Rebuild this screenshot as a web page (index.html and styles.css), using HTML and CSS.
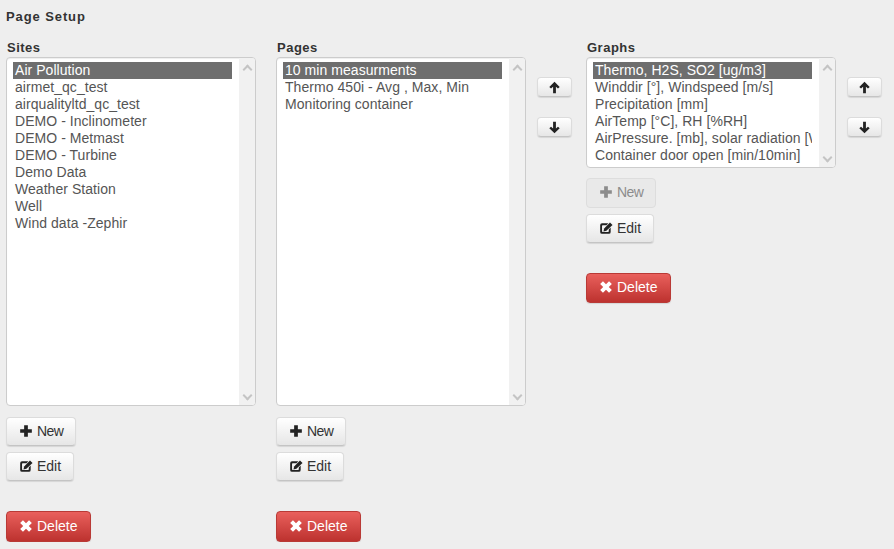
FILE: index.html
```html
<!DOCTYPE html>
<html lang="en">
<head>
  <meta charset="UTF-8">
  <title>Page Setup</title>
  <link rel="stylesheet" href="styles.css">
</head>
<body>
  <svg class="defs" width="0" height="0">
    <symbol id="i-plus" viewBox="0 0 12 12"><path d="M4.4 1h3.2v3.4H11v3.2H7.6V11H4.4V7.6H1V4.4h3.4z"/></symbol>
    <symbol id="i-edit" viewBox="0 0 12 12"><path d="M2.6 2H8L6.4 3.6H3.2q-.6 0-.6.6v4.6q0 .6.6.6h4.6q.6 0 .6-.6V7.2L10 5.6v3.8Q10 11 8.4 11H2.6Q1 11 1 9.4V3.6Q1 2 2.6 2z"/><path d="M9.4 1.2 11.6 3.4 6.3 8.4 3.8 9 4.4 6.4z"/></symbol>
    <symbol id="i-remove" viewBox="0 0 12 12"><path d="M3.4 1 6 3.6 8.6 1 11 3.4 8.4 6 11 8.6 8.6 11 6 8.4 3.4 11 1 8.6 3.6 6 1 3.4z"/></symbol>
    <symbol id="i-up" viewBox="0 0 12 12"><path d="M6 .8 10.8 5.6 9.2 7 7.3 5.2V11.4H4.7V5.2L2.8 7 1.2 5.6z"/></symbol>
    <symbol id="i-down" viewBox="0 0 12 12"><path d="M6 11.4 10.8 6.6 9.2 5.2 7.3 7V.8H4.7V7L2.8 5.2 1.2 6.6z"/></symbol>
  </svg>

  <h1 class="page-title">Page Setup</h1>

  <div class="columns">
    <div class="col">
      <label class="col-title">Sites</label>
      <div class="listbox tall">
        <ul class="options">
          <li class="selected">Air Pollution</li>
          <li>airmet_qc_test</li>
          <li>airqualityltd_qc_test</li>
          <li>DEMO - Inclinometer</li>
          <li>DEMO - Metmast</li>
          <li>DEMO - Turbine</li>
          <li>Demo Data</li>
          <li>Weather Station</li>
          <li>Well</li>
          <li>Wind data -Zephir</li>
        </ul>
        <div class="scrollbar"><span class="chev up"></span><span class="chev down"></span></div>
      </div>
      <div class="actions">
        <button class="btn btn-new"><svg class="icon"><use href="#i-plus"/></svg>New</button>
        <button class="btn"><svg class="icon"><use href="#i-edit"/></svg>Edit</button>
        <button class="btn btn-danger"><svg class="icon"><use href="#i-remove"/></svg>Delete</button>
      </div>
    </div>

    <div class="col">
      <label class="col-title">Pages</label>
      <div class="listbox tall">
        <ul class="options">
          <li class="selected">10 min measurments</li>
          <li>Thermo 450i - Avg , Max, Min</li>
          <li>Monitoring container</li>
        </ul>
        <div class="scrollbar"><span class="chev up"></span><span class="chev down"></span></div>
      </div>
      <div class="actions">
        <button class="btn btn-new"><svg class="icon"><use href="#i-plus"/></svg>New</button>
        <button class="btn"><svg class="icon"><use href="#i-edit"/></svg>Edit</button>
        <button class="btn btn-danger"><svg class="icon"><use href="#i-remove"/></svg>Delete</button>
      </div>
    </div>

    <div class="movers">
      <button class="btn btn-mini"><svg class="icon"><use href="#i-up"/></svg></button>
      <button class="btn btn-mini"><svg class="icon"><use href="#i-down"/></svg></button>
    </div>

    <div class="col">
      <label class="col-title">Graphs</label>
      <div class="listbox short">
        <ul class="options">
          <li class="selected">Thermo, H2S, SO2 [ug/m3]</li>
          <li>Winddir [°], Windspeed [m/s]</li>
          <li>Precipitation [mm]</li>
          <li>AirTemp [°C], RH [%RH]</li>
          <li>AirPressure. [mb], solar radiation [W/m2]</li>
          <li>Container door open [min/10min]</li>
        </ul>
        <div class="scrollbar"><span class="chev up"></span><span class="chev down"></span></div>
      </div>
      <div class="actions compact">
        <button class="btn btn-new disabled"><svg class="icon"><use href="#i-plus"/></svg>New</button>
        <button class="btn"><svg class="icon"><use href="#i-edit"/></svg>Edit</button>
        <button class="btn btn-danger"><svg class="icon"><use href="#i-remove"/></svg>Delete</button>
      </div>
    </div>

    <div class="movers">
      <button class="btn btn-mini"><svg class="icon"><use href="#i-up"/></svg></button>
      <button class="btn btn-mini"><svg class="icon"><use href="#i-down"/></svg></button>
    </div>
  </div>
</body>
</html>
```

FILE: styles.css
```css
body {
  margin: 0;
  padding: 9px 6px 0;
  background-color: #eeeeee;
  color: #333333;
  font-family: "Liberation Sans", Arial, sans-serif;
  font-size: 14px;
  overflow: hidden;
}
.defs {
  position: absolute;
}
.page-title {
  margin: 0;
  font-size: 13px;
  line-height: 15px;
  font-weight: bold;
  letter-spacing: 0.9px;
}
.columns {
  display: flex;
  margin-top: 16px;
}
.col {
  flex: none;
  width: 250px;
  margin-right: 20px;
}
.col-title {
  display: block;
  height: 17px;
  padding-left: 1px;
  font-size: 13px;
  line-height: 16px;
  font-weight: bold;
  letter-spacing: 0.5px;
}
.listbox {
  display: flex;
  box-sizing: border-box;
  background: #fff;
  border: 1px solid #cccccc;
  border-radius: 4px;
  box-shadow: inset 0 1px 1px rgba(0,0,0,0.07);
  overflow: hidden;
}
.listbox.tall {
  height: 349px;
}
.listbox.short {
  height: 111px;
}
.options {
  flex: 1;
  min-width: 0;
  margin: 4px 7px 0 6px;
  padding: 0;
  list-style: none;
  line-height: 17px;
  letter-spacing: 0.05px;
  color: #555555;
}
.options li {
  height: 17px;
  padding: 0 2px;
  white-space: nowrap;
  overflow: hidden;
}
.options li.selected {
  background-color: #6e6e6e;
  color: #fff;
}
.scrollbar {
  flex: none;
  display: flex;
  flex-direction: column;
  justify-content: space-between;
  align-items: center;
  width: 16px;
  padding: 5px 0;
  box-sizing: border-box;
  background-color: #f1f1f1;
}
.chev {
  width: 5px;
  height: 5px;
  border-left: 2px solid #c4c4c4;
  border-top: 2px solid #c4c4c4;
}
.chev.up {
  margin-top: 3px;
  transform: rotate(45deg);
}
.chev.down {
  margin-bottom: 1px;
  transform: rotate(225deg);
}
.actions {
  display: flex;
  flex-direction: column;
  align-items: flex-start;
  margin-top: 11px;
}
.actions.compact {
  margin-top: 10px;
}
.btn {
  display: flex;
  align-items: center;
  box-sizing: border-box;
  height: 29px;
  padding: 0 12px 2px;
  margin-bottom: 6px;
  background: linear-gradient(to bottom, #ffffff, #e6e6e6);
  border: 1px solid #dcdcdc;
  border-bottom-color: #c4c4c4;
  border-radius: 4px;
  box-shadow: 0 1px 1px rgba(0,0,0,0.1);
  color: #333333;
  font-family: inherit;
  font-size: 14px;
}
.btn-new {
  letter-spacing: -0.6px;
}
.icon {
  width: 14px;
  height: 14px;
  margin-right: 4px;
  fill: #222222;
}
.btn.disabled {
  height: 30px;
  background: #e9e9e9;
  border-color: #dddddd;
  box-shadow: none;
  color: #8c8c8c;
}
.btn.disabled .icon {
  fill: #8c8c8c;
}
.btn-danger {
  height: 31px;
  margin-top: 24px;
  margin-bottom: 0;
  padding-right: 13px;
  background: linear-gradient(to bottom, #e9605c, #bd322f);
  border-color: #b93a36;
  color: #fff;
}
.compact .btn-danger {
  height: 30px;
}
.btn-danger .icon {
  fill: #fff;
}
.movers {
  flex: none;
  display: flex;
  flex-direction: column;
  gap: 20px;
  width: 35px;
  margin: 37px 14px 0 -9px;
}
.btn-mini {
  justify-content: center;
  width: 35px;
  height: 20px;
  padding: 0;
  margin: 0;
}
.btn-mini .icon {
  width: 13px;
  height: 13px;
  margin: 0;
}
```
